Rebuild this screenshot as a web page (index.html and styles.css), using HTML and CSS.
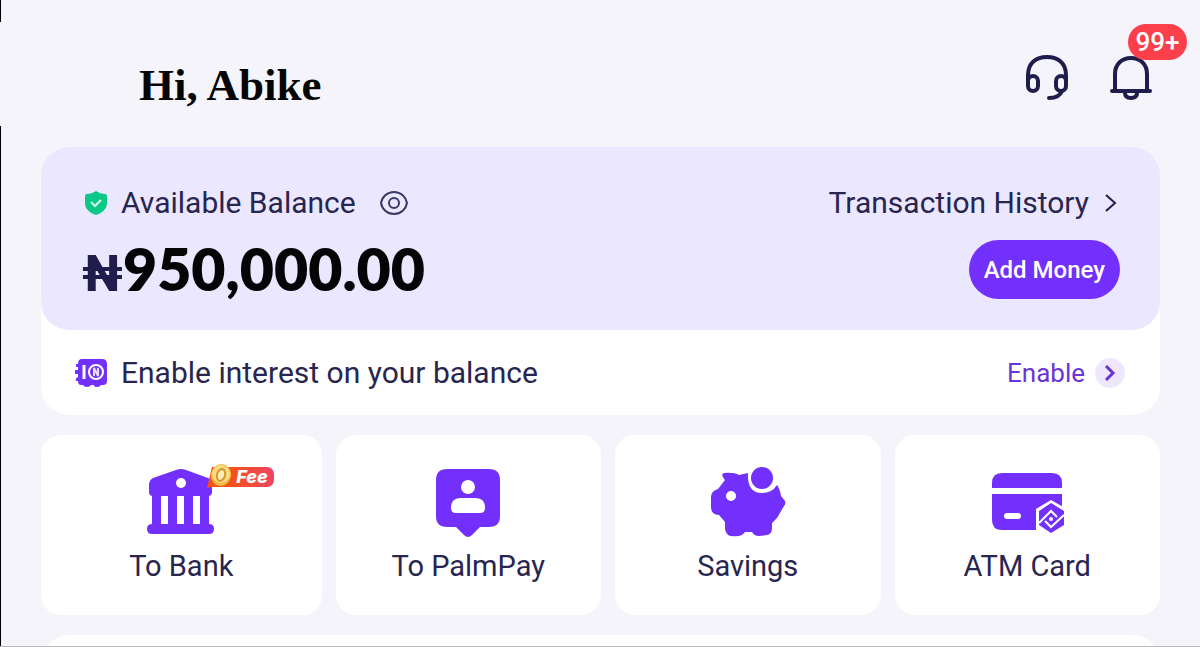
FILE: index.html
```html
<!DOCTYPE html>
<html lang="en">
<head>
    <meta charset="UTF-8">
    <meta name="viewport" content="width=device-width, initial-scale=1.0">
    <title>Wallet</title>
    <link rel="stylesheet" href="styles.css">
</head>
<body>
    <div class="page">
        <header class="header">
            <h1>Hi, Abike</h1>
            <div class="header-actions">
                <button class="icon-button" aria-label="Support">
                    <svg width="44" height="48" viewBox="0 0 44 48" fill="none" stroke="#201d4c" stroke-width="4" stroke-linecap="round">
                        <path d="M3 28V21C3 9 11 3 22 3s19 6 19 18v8"/>
                        <rect x="3" y="22" width="10" height="15" rx="5"/>
                        <rect x="31" y="22" width="10" height="15" rx="5"/>
                        <path d="M37 37c-2 5-6 7-13 7"/>
                    </svg>
                </button>
                <button class="icon-button" aria-label="Notifications">
                    <svg width="44" height="48" viewBox="0 0 44 48" fill="none" stroke="#201d4c" stroke-width="4" stroke-linecap="round">
                        <path d="M6 37V20C6 10 13 4 22 4s16 6 16 16v17M3 37h38"/>
                        <path d="M16 39c0 3 2 5 6 5s6-2 6-5"/>
                    </svg>
                    <span class="count">99+</span>
                </button>
            </div>
        </header>

        <main class="content">
            <section class="card">
                <div class="balance">
                    <div class="row">
                        <div class="balance-label">
                            <svg class="shield" width="22" height="24" viewBox="0 0 22 24">
                                <path d="M11 0c3 2 6 3 9 3q2 0 2 2v7c0 6-5 10-11 12C5 22 0 18 0 12V5q0-2 2-2c3 0 6-1 9-3z" fill="#0ac885"/>
                                <path d="M6 11l4 4 6-6" fill="none" stroke="#d9fbe9" stroke-width="2"/>
                            </svg>
                            <span>Available Balance</span>
                            <button class="icon-button eye" aria-label="Hide balance">
                                <svg width="28" height="24" viewBox="0 0 28 24" fill="none" stroke="#3b3865" stroke-width="2">
                                    <path d="M1 12C2 6 7 1 14 1s12 5 13 11c-1 6-6 11-13 11S2 18 1 12z"/>
                                    <circle cx="14" cy="12" r="5"/>
                                </svg>
                            </button>
                        </div>
                        <a class="history" href="#">Transaction History
                            <svg width="12" height="20" viewBox="0 0 12 20" fill="none" stroke="#201d4c" stroke-width="2"><path d="M1 2l9 8-9 8"/></svg>
                        </a>
                    </div>
                    <div class="row">
                        <div class="amount"><span class="naira">₦</span>950,000.00</div>
                        <button class="add-money">Add Money</button>
                    </div>
                </div>
                <div class="interest">
                    <div class="interest-label">
                        <svg width="34" height="30" viewBox="0 0 34 30">
                            <path d="M8 1h20q5 0 5 5v17q0 4-4 4h-2q-1 2-4 2t-3-2h-3q-1 2-4 2t-4-2H7q-3 0-3-4H2q-1-3 2-4v-3H1v-4h3V9H2V6h2q0-5 4-5z" fill="#7330fc"/>
                            <path d="M10 7v14" stroke="#fff" stroke-width="3"/>
                            <circle cx="22" cy="14" r="7" fill="none" stroke="#fff" stroke-width="2"/>
                            <path d="M20 18v-8l4 8v-8" fill="none" stroke="#e8deff" stroke-width="2"/>
                        </svg>
                        <span>Enable interest on your balance</span>
                    </div>
                    <a class="enable" href="#">Enable
                        <span class="round">
                            <svg width="12" height="16" viewBox="0 0 12 16" fill="none" stroke="#6a35d8" stroke-width="3"><path d="M2 1l7 7-7 7"/></svg>
                        </span>
                    </a>
                </div>
            </section>

            <nav class="tiles">
                <a class="tile" href="#">
                    <span class="tile-icon">
                        <svg width="76" height="72" viewBox="0 0 76 72">
                            <path d="M6 19q0-5 4-7L33 4q5-2 10 0l22 8q4 2 4 7v7q0 3-3 4v28q5 0 5 5t-5 5H9q-5 0-5-5t5-5V30q-3-1-3-4z" fill="#7330fc"/>
                            <path d="M18 30h7v28h-7zM34 30h7v28h-7zM50 30h7v28h-7z" fill="#fff"/>
                            <circle cx="38" cy="17" r="5" fill="#fff"/>
                        </svg>
                        <span class="fee">
                            <svg width="26" height="24" viewBox="0 0 26 24">
                                <path d="M0 24L5 3h21v20H5z" fill="#f4521c"/>
                                <ellipse cx="14" cy="11" rx="10" ry="11" transform="rotate(16 14 11)" fill="#f5b743"/>
                                <ellipse cx="14" cy="10" rx="9" ry="9" transform="rotate(16 14 10)" fill="#fbdc82"/>
                                <ellipse cx="14" cy="11" rx="4" ry="6" transform="rotate(16 14 11)" fill="#fff0b8" stroke="#d9962f" stroke-width="2"/>
                            </svg>
                            <b>Fee</b>
                        </span>
                    </span>
                    <span>To Bank</span>
                </a>
                <a class="tile" href="#">
                    <span class="tile-icon">
                        <svg width="76" height="72" viewBox="0 0 76 72">
                            <path d="M17 3h42q11 0 11 11v36q0 11-11 11h-9l-8 8q-4 4-8 0l-8-8h-9Q6 61 6 50V14Q6 3 17 3z" fill="#7330fc"/>
                            <circle cx="38" cy="21" r="7" fill="#fff"/>
                            <path d="M21 42q0-10 9-10h16q9 0 9 10 0 5-5 5H26q-5 0-5-5z" fill="#fff"/>
                        </svg>
                    </span>
                    <span>To PalmPay</span>
                </a>
                <a class="tile" href="#">
                    <span class="tile-icon">
                        <svg width="76" height="72" viewBox="0 0 76 72">
                            <path d="M14 7q10-1 15 2l9-2q-1 20 14 20 10 0 15-8 3 4 4 11l4 5q1 3-1 5l-7 12-5 5v5q0 6-5 7l-8 1q-5 0-7-4h-7q-3 4-7 4-12 2-13-7v-7L9 49q-8 0-8-8V31q0-6 7-8l7-9q-5-6-1-7z" fill="#7330fc"/>
                            <circle cx="21" cy="30" r="5" fill="#fff"/>
                            <circle cx="52" cy="12" r="11" fill="#7330fc"/>
                        </svg>
                    </span>
                    <span>Savings</span>
                </a>
                <a class="tile" href="#">
                    <span class="tile-icon">
                        <svg width="76" height="72" viewBox="0 0 76 72">
                            <path d="M3 22v-5Q3 7 13 7h50q10 0 10 10v5zM3 28h70v36H13Q3 64 3 54z" fill="#7330fc"/>
                            <rect x="15" y="47" width="17" height="6" rx="3" fill="#fff"/>
                            <path d="M62 34l14 8v25H47V43z" fill="#fff"/>
                            <path d="M62 37l13 8v14l-13 8-12-8V45z" fill="#7330fc"/>
                            <path d="M50 57l12-12 6 6M75 49L62 61l-6-6" fill="none" stroke="#fff" stroke-width="2"/>
                            <circle cx="62" cy="53" r="2" fill="#fff"/>
                        </svg>
                    </span>
                    <span>ATM Card</span>
                </a>
            </nav>

            <section class="next-card"></section>
        </main>
    </div>
</body>
</html>
```
FILE: styles.css
```css
* {
    box-sizing: border-box;
}
body {
    margin: 0;
    font-family: Roboto, "Liberation Sans", sans-serif;
    font-size: 30px;
    line-height: 36px;
    color: #28254f;
    background-color: #f5f4fa;
}
.page {
    display: flex;
    flex-direction: column;
    height: 100vh;
    min-height: 640px;
    overflow: hidden;
    border-bottom: 1px solid #b9b9bb;
    /* thin edge line, open beside the greeting */
    background: linear-gradient(#000 22px, transparent 22px 126px, #000 126px) left / 1px 100% no-repeat;
}
a {
    color: inherit;
    text-decoration: none;
}
button {
    font-family: inherit;
    border: none;
    cursor: pointer;
}
svg {
    display: block;
    flex-shrink: 0;
}
.header {
    display: flex;
    justify-content: space-between;
    padding: 54px 47px 38px 139px;
}
h1 {
    margin: 0;
    padding-top: 7px;
    font-family: "Liberation Serif", serif;
    font-size: 45px;
    line-height: 48px;
    color: #050507;
}
.header-actions {
    display: flex;
    gap: 40px;
}
.icon-button {
    position: relative;
    padding: 0;
    background: none;
}
.header .icon-button {
    height: 48px;
}
.count {
    position: absolute;
    left: 19px;
    bottom: 42px;
    width: 59px;
    border-radius: 18px;
    background-color: #fb404c;
    color: #fff;
    font-size: 26px;
    font-weight: 500;
    line-height: 36px;
}
.content {
    display: flex;
    flex: 1;
    flex-direction: column;
    gap: 20px;
    padding: 0 40px 0 41px;
}
.card {
    border-radius: 28px;
    background-color: #fff;
}
.balance {
    padding: 38px 40px 31px 41px;
    border-radius: 28px;
    background-color: #eae7ff;
}
.row, .interest {
    display: flex;
    align-items: center;
    justify-content: space-between;
}
.balance-label, .interest-label, .history, .enable {
    display: flex;
    align-items: center;
}
.shield {
    margin: 0 14px 0 3px;
}
.eye {
    margin-left: 24px;
}
.history {
    gap: 16px;
    padding-right: 3px;
}
.amount {
    display: flex;
    align-items: baseline;
    padding-top: 18px;
    font-family: Lato, sans-serif;
    font-size: 59px;
    font-weight: 800;
    line-height: 60px;
    color: #050507;
}
.naira {
    font-family: Roboto, sans-serif;
    font-size: 50px;
    line-height: 50px;
    color: #201d4c;
}
.add-money {
    height: 59px;
    margin-top: 18px;
    padding: 2px 15px 0;
    border-radius: 30px;
    background-color: #7330fc;
    color: #fff;
    font-size: 24px;
    font-weight: 500;
}
.interest {
    padding: 25px 35px 24px 33px;
}
.interest-label {
    gap: 13px;
}
.enable {
    gap: 10px;
    font-size: 26px;
    color: #6a35d8;
}
.round {
    display: grid;
    place-items: center;
    width: 30px;
    height: 30px;
    border-radius: 50%;
    background-color: #eee7fd;
}
.tiles {
    display: grid;
    grid-template-columns: 280fr 265fr 265fr 265fr;
    gap: 14px;
}
.tile {
    display: flex;
    flex-direction: column;
    align-items: center;
    gap: 10px;
    padding: 31px 0;
    border-radius: 20px;
    background-color: #fff;
    font-size: 29px;
}
.tile-icon {
    position: relative;
}
.fee {
    position: absolute;
    top: -2px;
    left: 64px;
    display: flex;
}
.fee b {
    height: 20px;
    margin-top: 3px;
    padding: 0 6px 0 3px;
    border-radius: 0 7px 7px 0;
    background: linear-gradient(90deg, #f4521c, #f04363);
    color: #fff;
    font-family: Inter, sans-serif;
    font-size: 18px;
    font-style: italic;
    font-weight: 800;
    line-height: 20px;
}
.next-card {
    flex: 1 0 60px;
    border-radius: 28px 28px 0 0;
    background-color: #fff;
}
```
